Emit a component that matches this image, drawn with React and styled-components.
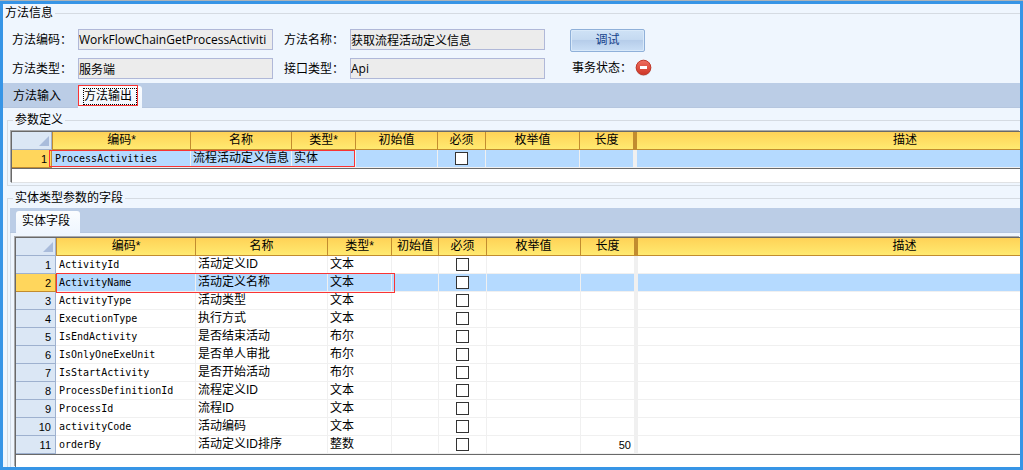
import { useState } from 'react';
import styled, { createGlobalStyle, css } from 'styled-components';

const GlobalStyle = createGlobalStyle`
  * {
    box-sizing: border-box;
  }

  body {
    margin: 0;
    background: #eff6fe;
    color: #000;
    font-family: 'Liberation Sans', 'Noto Sans CJK SC', sans-serif;
    font-size: 12px;
    line-height: 14px;
  }

  button,
  input {
    font: inherit;
    color: inherit;
  }
`;

const Page = styled.div`
  min-height: 100vh;
  display: flex;
  flex-direction: column;
  border-top: 1px solid #adb3b8;
`;

const Frame = styled.main`
  flex: 1;
  display: flex;
  flex-direction: column;
  border: 3px solid #3795e6;
  overflow: hidden;
`;

const Group = styled.fieldset`
  margin: 5px 0 0 4px;
  padding: 3px 0 2px 2px;
  min-width: 0;
  border: 1px solid #d5dbe2;
  border-right: 0;

  ${({ $fill }) =>
    $fill &&
    css`
      flex: 1 0 auto;
      display: flex;
      flex-direction: column;
      padding-bottom: 0;
      border-bottom: 0;
    `}
`;

const InfoGroup = styled(Group)`
  margin: 2px 0 0;
  padding: 9px 0 4px;
  border-width: 1px 0 0;
`;

const Legend = styled.legend`
  height: 14px;
  margin-left: ${({ $indent }) => $indent}px;
  padding: 0 2px;
`;

const Form = styled.div`
  display: flex;
  flex-wrap: wrap;
  padding-left: 9px;
`;

const FieldColumn = styled.div`
  display: grid;
  grid-template-columns: 66px 195px;
  grid-auto-rows: 21px;
  row-gap: 8px;
  margin-right: 11px;
`;

const Label = styled.label`
  padding-top: 1px;
  line-height: 21px;
`;

const TextInput = styled.input`
  width: 100%;
  height: 21px;
  padding: 0;
  border: 1px solid #b0b8d8;
  border-radius: 0;
  background: #ececec;
  font-family: 'Open Sans', 'Noto Sans CJK SC', sans-serif;
  outline: none;
`;

const Actions = styled.div`
  display: flex;
  flex-direction: column;
  gap: 5px;
  margin-left: 14px;
`;

const DebugButton = styled.button`
  width: 75px;
  height: 23px;
  padding: 0 0 2px;
  border: 1px solid #8fb0d9;
  border-radius: 2px;
  background: linear-gradient(#cfe2f6 0%, #c5daf1 45%, #b6cdea 50%, #cadff6 100%);
  box-shadow: inset 0 0 0 1px #d9e9f9;
  color: #15428b;
`;

const Status = styled.div`
  display: flex;
  align-items: center;
  gap: 3px;
  height: 21px;
  padding-left: 2px;

  svg {
    display: block;
  }
`;

const TabBar = styled.div`
  display: flex;
  align-items: flex-end;
  gap: 7px;
  height: 25px;
  padding-left: ${({ $indent }) => $indent}px;
  border-bottom: 1px solid #b5c6df;
  background: #bbcde6;
`;

const Tab = styled.button`
  position: relative;
  width: 64px;
  height: 22px;
  margin-bottom: -1px;
  padding: 0 8px 2px 6px;
  border: 0;
  border-radius: 3px 3px 0 0;
  background: ${({ $active }) => ($active ? 'linear-gradient(#fbfdff, #eff6fe)' : 'transparent')};
  text-align: left;
  white-space: nowrap;
  outline: none;
`;

/* dotted focus ring drawn inside the tab */
const FocusRing = styled.span`
  position: absolute;
  inset: 2px 5px 3px;
  border: 1px dotted #000;
`;

const RedBox = styled.div`
  position: absolute;
  left: ${({ $x }) => $x}px;
  top: ${({ $y }) => $y}px;
  width: ${({ $w }) => $w}px;
  height: ${({ $h }) => $h}px;
  border: 1px solid #fa3434;
  pointer-events: none;
`;

const Panel = styled.div`
  flex: 1;
  display: flex;
  flex-direction: column;
  padding: 3px 0 0 3px;
  border-left: 1px solid #d3dde8;
`;

const Grid = styled.div`
  position: relative;
  margin: 1px 0 0 1px;
  padding-bottom: ${({ $fill }) => ($fill ? 12 : 13)}px;
  border: 1px solid #696969;
  border-width: 1px 0 0 1px;
  box-shadow: -1px -1px 0 #a9aaac;
  background: #fff;
  overflow: hidden;

  ${({ $fill }) =>
    $fill
      ? 'flex: 1 0 auto;'
      : 'border-bottom: 1px solid #e0e2e4;'}
`;

const Table = styled.table`
  width: ${({ $width }) => $width}px;
  min-width: 100%;
  table-layout: fixed;
  border-collapse: separate;
  border-spacing: 0;
  border-bottom: 1px solid #696969;
`;

const Row = styled.tr`
  height: 18px;
  background: ${({ $selected }) => ($selected ? '#b5daff' : '#fff')};
`;

const HeadCell = styled.th`
  height: 18px;
  padding: 0 0 1px;
  border-right: ${({ $frozen }) => ($frozen ? 4 : 1)}px solid #c28c2f;
  border-bottom: 1px solid #c28c2f;
  background: linear-gradient(#ffd257, #ffea70);
  font-weight: normal;
  line-height: 14px;

  &:nth-child(2) {
    border-left: 1px solid #c28c2f;
  }
`;

const Corner = styled.td`
  padding: 0 2px 0 0;
  border-right: 1px solid #9eb1cf;
  border-bottom: 1px solid #9eb1cf;
  background: #dbe7f5;

  svg {
    display: block;
    margin-left: auto;
  }
`;

const RowNumber = styled.th`
  height: 18px;
  padding: 0 4px 0 0;
  border-right: 1px solid ${({ $selected }) => ($selected ? '#c28c2f' : '#9eb1cf')};
  border-bottom: 1px solid ${({ $selected }) => ($selected ? '#c28c2f' : '#9eb1cf')};
  background: ${({ $selected }) => ($selected ? '#ffd65c' : '#dbe7f5')};
  font-size: 11px;
  font-weight: normal;
  text-align: right;
`;

const Cell = styled.td`
  height: 18px;
  padding: 0 2px 1px;
  border-right: ${({ $frozen }) => ($frozen ? 4 : 1)}px solid #f0f0f0;
  border-bottom: 1px solid #f0f0f0;
  line-height: 14px;
  white-space: nowrap;
`;

const LengthCell = styled(Cell)`
  padding: 0 3px 0 0;
  font-size: 11px;
  text-align: right;
`;

const CheckCell = styled(Cell)`
  padding: 0;
`;

const CodeCell = styled(Cell)`
  padding: 0 0 0 3px;
  font-family: 'DejaVu Sans Mono', monospace;
  font-size: 10px;
`;

const CheckBox = styled.input`
  display: block;
  appearance: none;
  width: 13px;
  height: 13px;
  margin: 0 auto;
  border: 1px solid #333;
  border-radius: 0;
  background: #fff;

  &:checked {
    box-shadow: inset 0 0 0 3px #fff;
    background: #333;
  }
`;

const headers = ['编码*', '名称', '类型*', '初始值', '必须', '枚举值', '长度', '描述'];

// the last column takes what is left of the table width
const paramWidths = [40, 139, 101, 64, 82, 48, 94, 57];
const fieldWidths = [40, 140, 132, 64, 47, 48, 94, 57];

const params = [{ code: 'ProcessActivities', name: '流程活动定义信息', type: '实体' }];

const fields = [
  { code: 'ActivityId', name: '活动定义ID', type: '文本' },
  { code: 'ActivityName', name: '活动定义名称', type: '文本' },
  { code: 'ActivityType', name: '活动类型', type: '文本' },
  { code: 'ExecutionType', name: '执行方式', type: '文本' },
  { code: 'IsEndActivity', name: '是否结束活动', type: '布尔' },
  { code: 'IsOnlyOneExeUnit', name: '是否单人审批', type: '布尔' },
  { code: 'IsStartActivity', name: '是否开始活动', type: '布尔' },
  { code: 'ProcessDefinitionId', name: '流程定义ID', type: '文本' },
  { code: 'ProcessId', name: '流程ID', type: '文本' },
  { code: 'activityCode', name: '活动编码', type: '文本' },
  { code: 'orderBy', name: '活动定义ID排序', type: '整数', length: 50 },
];

const StopIcon = () => (
  <svg width="17" height="17" viewBox="0 0 17 17" aria-hidden="true">
    <defs>
      <linearGradient id="stop" x1="0" y1="0" x2="0" y2="1">
        <stop offset="0" stopColor="#ee7061" />
        <stop offset="1" stopColor="#cf3526" />
      </linearGradient>
    </defs>
    <circle cx="8.5" cy="9" r="7.8" fill="#c9b3b3" />
    <circle cx="8.5" cy="8.5" r="7.3" fill="url(#stop)" stroke="#c0392b" />
    <rect x="5" y="7" width="7" height="3" fill="#fff" />
  </svg>
);

const DataGrid = ({ label, width, widths, rows, initial, fill, children }) => {
  const [selected, setSelected] = useState(initial);

  return (
    <Grid $fill={fill}>
      <Table aria-label={label} $width={width}>
        <colgroup>
          {widths.map((colWidth, i) => (
            <col key={i} width={colWidth} />
          ))}
          <col />
        </colgroup>
        <thead>
          <Row>
            <Corner>
              <svg width="10" height="10" viewBox="0 0 10 10" aria-hidden="true">
                <path d="M10 0V10H0Z" fill="#a9bcdb" />
              </svg>
            </Corner>
            {headers.map((text) => (
              <HeadCell key={text} scope="col" $frozen={text === '长度'}>
                {text}
              </HeadCell>
            ))}
          </Row>
        </thead>
        <tbody>
          {rows.map((row, i) => (
            <Row key={row.code} $selected={i === selected} onClick={() => setSelected(i)}>
              <RowNumber scope="row" $selected={i === selected}>
                {i + 1}
              </RowNumber>
              <CodeCell>{row.code}</CodeCell>
              <Cell>{row.name}</Cell>
              <Cell>{row.type}</Cell>
              <Cell />
              <CheckCell>
                <CheckBox type="checkbox" aria-label={`${row.code} 必须`} />
              </CheckCell>
              <Cell />
              <LengthCell $frozen>{row.length}</LengthCell>
              <Cell />
            </Row>
          ))}
        </tbody>
      </Table>
      {children}
    </Grid>
  );
};

export default function App() {
  const [tab, setTab] = useState('output');

  return (
    <Page>
      <GlobalStyle />
      <Frame>
        <InfoGroup>
          <Legend $indent={0}>方法信息</Legend>
          <Form>
            <FieldColumn>
              <Label htmlFor="code">方法编码：</Label>
              <TextInput id="code" readOnly value="WorkFlowChainGetProcessActiviti" />
              <Label htmlFor="kind">方法类型：</Label>
              <TextInput id="kind" readOnly value="服务端" />
            </FieldColumn>
            <FieldColumn>
              <Label htmlFor="name">方法名称：</Label>
              <TextInput id="name" readOnly value="获取流程活动定义信息" />
              <Label htmlFor="api">接口类型：</Label>
              <TextInput id="api" readOnly value="Api" />
            </FieldColumn>
            <Actions>
              <DebugButton type="button">调试</DebugButton>
              <Status>
                事务状态：
                <StopIcon />
              </Status>
            </Actions>
          </Form>
        </InfoGroup>

        <TabBar role="tablist" $indent={4}>
          <Tab
            type="button"
            role="tab"
            aria-selected={tab === 'input'}
            $active={tab === 'input'}
            onClick={() => setTab('input')}
          >
            方法输入
          </Tab>
          <Tab
            type="button"
            role="tab"
            aria-selected={tab === 'output'}
            $active={tab === 'output'}
            onClick={() => setTab('output')}
          >
            方法输出
            <FocusRing />
            <RedBox as="span" $x={0} $y={-1} $w={60} $h={21} />
          </Tab>
        </TabBar>

        <Group>
          <Legend $indent={3}>参数定义</Legend>
          <DataGrid label="参数定义" width={1162} widths={paramWidths} rows={params} initial={0}>
            <RedBox $x={37} $y={18} $w={306} $h={17} />
          </DataGrid>
        </Group>

        <Group $fill>
          <Legend $indent={3}>实体类型参数的字段</Legend>
          <TabBar role="tablist" $indent={6}>
            <Tab type="button" role="tab" aria-selected $active>
              实体字段
            </Tab>
          </TabBar>
          <Panel>
            <DataGrid label="实体字段" width={1156} widths={fieldWidths} rows={fields} initial={1} fill>
              <RedBox $x={40} $y={35} $w={339} $h={20} />
            </DataGrid>
          </Panel>
        </Group>
      </Frame>
    </Page>
  );
}
